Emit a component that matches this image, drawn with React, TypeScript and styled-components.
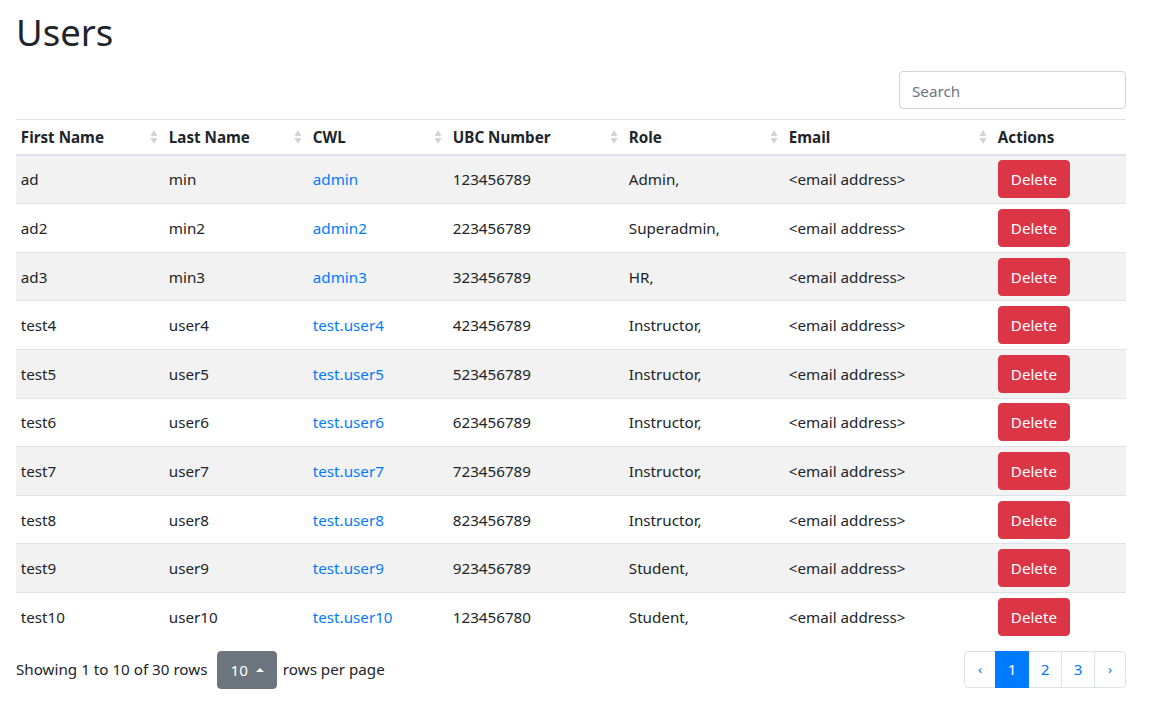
import styled, { createGlobalStyle } from "styled-components";

const GlobalStyle = createGlobalStyle`
	body {
		margin: 0;
		background: #ffffff;
		color: #212529;
		font-family: "Noto Sans", "Open Sans", sans-serif;
		font-size: 15.2px;
		line-height: 1.5;
	}
	* {
		box-sizing: border-box;
	}
`;

const Page = styled.div`
	width: 1110px;
	margin-left: 16px;
	padding-top: 8px;
`;

const Title = styled.h1`
	margin: 0;
	font-size: 36.5px;
	font-weight: 400;
	line-height: 48px;
`;

const Toolbar = styled.div`
	display: flex;
	justify-content: flex-end;
	margin-top: 15px;
	margin-bottom: 10px;
`;

const SearchInput = styled.input`
	width: 227px;
	height: 38px;
	padding: 7px 12px 5px;
	font-family: inherit;
	font-size: 15.2px;
	color: #495057;
	border: 1px solid #ced4da;
	border-radius: 4px;
	outline: none;
	&::placeholder {
		color: #6c757d;
	}
`;

const Table = styled.table`
	width: 100%;
	border-collapse: collapse;
	table-layout: fixed;
`;

const HeadCell = styled.th<{ $width: number }>`
	width: ${(p) => p.$width}px;
	padding: 5px 4.8px 4.6px;
	text-align: left;
	font-weight: 700;
	line-height: 24px;
	border-top: 1px solid #dee2e6;
	border-bottom: 2px solid #dee2e6;
	vertical-align: bottom;
`;

const HeadInner = styled.div`
	display: flex;
	align-items: center;
	justify-content: space-between;
	white-space: nowrap;
`;

const SortIcon = styled.svg`
	flex: none;
	margin-right: 1px;
`;

const Row = styled.tr<{ $striped: boolean }>`
	background: ${(p) => (p.$striped ? "#f2f2f2" : "transparent")};
`;

const Cell = styled.td`
	padding: 4.8px;
	line-height: 24px;
	border-top: 1px solid #dee2e6;
	vertical-align: middle;
	white-space: nowrap;
`;

const Link = styled.a`
	color: #007bff;
	text-decoration: none;
`;

const DeleteButton = styled.button`
	height: 38px;
	padding: 6px 12px;
	font-family: inherit;
	font-size: 15.2px;
	line-height: 24px;
	color: #ffffff;
	background: #dc3545;
	border: 1px solid #dc3545;
	border-radius: 4px;
`;

const Footer = styled.div`
	display: flex;
	align-items: center;
	justify-content: space-between;
	margin-top: 10px;
`;

const Info = styled.div`
	display: flex;
	align-items: center;
	gap: 6px;
`;

const PageSize = styled.button`
	display: flex;
	align-items: center;
	gap: 8px;
	height: 38px;
	margin-left: 4px;
	padding: 6px 12px;
	font-family: inherit;
	font-size: 15.2px;
	line-height: 24px;
	color: #ffffff;
	background: #6c757d;
	border: 1px solid #6c757d;
	border-radius: 4px;
`;

const Caret = styled.span`
	width: 0;
	height: 0;
	border-left: 4px solid transparent;
	border-right: 4px solid transparent;
	border-bottom: 4px solid #ffffff;
`;

const Pagination = styled.ul`
	display: flex;
	margin: 0;
	padding: 0;
	list-style: none;
`;

const PageLink = styled.li<{ $active?: boolean; $small?: boolean }>`
	display: flex;
	align-items: center;
	justify-content: center;
	height: 37px;
	width: ${(p) => (p.$small ? "32px" : "34px")};
	margin-left: -1px;
	font-size: ${(p) => (p.$small ? "13px" : "15.2px")};
	color: ${(p) => (p.$active ? "#ffffff" : "#007bff")};
	background: ${(p) => (p.$active ? "#007bff" : "#ffffff")};
	border: 1px solid ${(p) => (p.$active ? "#007bff" : "#dee2e6")};
	position: relative;
	z-index: ${(p) => (p.$active ? 1 : 0)};
	&:first-child {
		margin-left: 0;
		border-radius: 4px 0 0 4px;
	}
	&:last-child {
		border-radius: 0 4px 4px 0;
	}
`;

const columns = [
	{ name: "First Name", width: 148, sort: true },
	{ name: "Last Name", width: 144, sort: true },
	{ name: "CWL", width: 140, sort: true },
	{ name: "UBC Number", width: 176, sort: true },
	{ name: "Role", width: 160, sort: true },
	{ name: "Email", width: 209, sort: true },
	{ name: "Actions", width: 133, sort: false },
];

const users = [
	{ first: "ad", last: "min", cwl: "admin", ubc: "123456789", role: "Admin," },
	{ first: "ad2", last: "min2", cwl: "admin2", ubc: "223456789", role: "Superadmin," },
	{ first: "ad3", last: "min3", cwl: "admin3", ubc: "323456789", role: "HR," },
	{ first: "test4", last: "user4", cwl: "test.user4", ubc: "423456789", role: "Instructor," },
	{ first: "test5", last: "user5", cwl: "test.user5", ubc: "523456789", role: "Instructor," },
	{ first: "test6", last: "user6", cwl: "test.user6", ubc: "623456789", role: "Instructor," },
	{ first: "test7", last: "user7", cwl: "test.user7", ubc: "723456789", role: "Instructor," },
	{ first: "test8", last: "user8", cwl: "test.user8", ubc: "823456789", role: "Instructor," },
	{ first: "test9", last: "user9", cwl: "test.user9", ubc: "923456789", role: "Student," },
	{ first: "test10", last: "user10", cwl: "test.user10", ubc: "123456780", role: "Student," },
];

function Sort() {
	return (
		<SortIcon width="8" height="18" viewBox="0 0 8 18">
			<path d="M4 2 L7.5 8 L0.5 8 Z" fill="#d4d4d4" />
			<path d="M0.5 10 L7.5 10 L4 16 Z" fill="#d4d4d4" />
		</SortIcon>
	);
}

export default function App() {
	return (
		<>
			<GlobalStyle />
			<Page>
				<Title>Users</Title>
				<Toolbar>
					<SearchInput placeholder="Search" />
				</Toolbar>
				<Table>
					<thead>
						<tr>
							{columns.map((c) => (
								<HeadCell key={c.name} $width={c.width}>
									<HeadInner>
										{c.name}
										{c.sort && <Sort />}
									</HeadInner>
								</HeadCell>
							))}
						</tr>
					</thead>
					<tbody>
						{users.map((u, i) => (
							<Row key={u.cwl} $striped={i % 2 === 0}>
								<Cell>{u.first}</Cell>
								<Cell>{u.last}</Cell>
								<Cell>
									<Link href="#">{u.cwl}</Link>
								</Cell>
								<Cell>{u.ubc}</Cell>
								<Cell>{u.role}</Cell>
								<Cell>&lt;email address&gt;</Cell>
								<Cell>
									<DeleteButton>Delete</DeleteButton>
								</Cell>
							</Row>
						))}
					</tbody>
				</Table>
				<Footer>
					<Info>
						Showing 1 to 10 of 30 rows
						<PageSize>
							10 <Caret />
						</PageSize>
						rows per page
					</Info>
					<Pagination>
						<PageLink $small>‹</PageLink>
						<PageLink $active>1</PageLink>
						<PageLink>2</PageLink>
						<PageLink>3</PageLink>
						<PageLink $small>›</PageLink>
					</Pagination>
				</Footer>
			</Page>
		</>
	);
}
